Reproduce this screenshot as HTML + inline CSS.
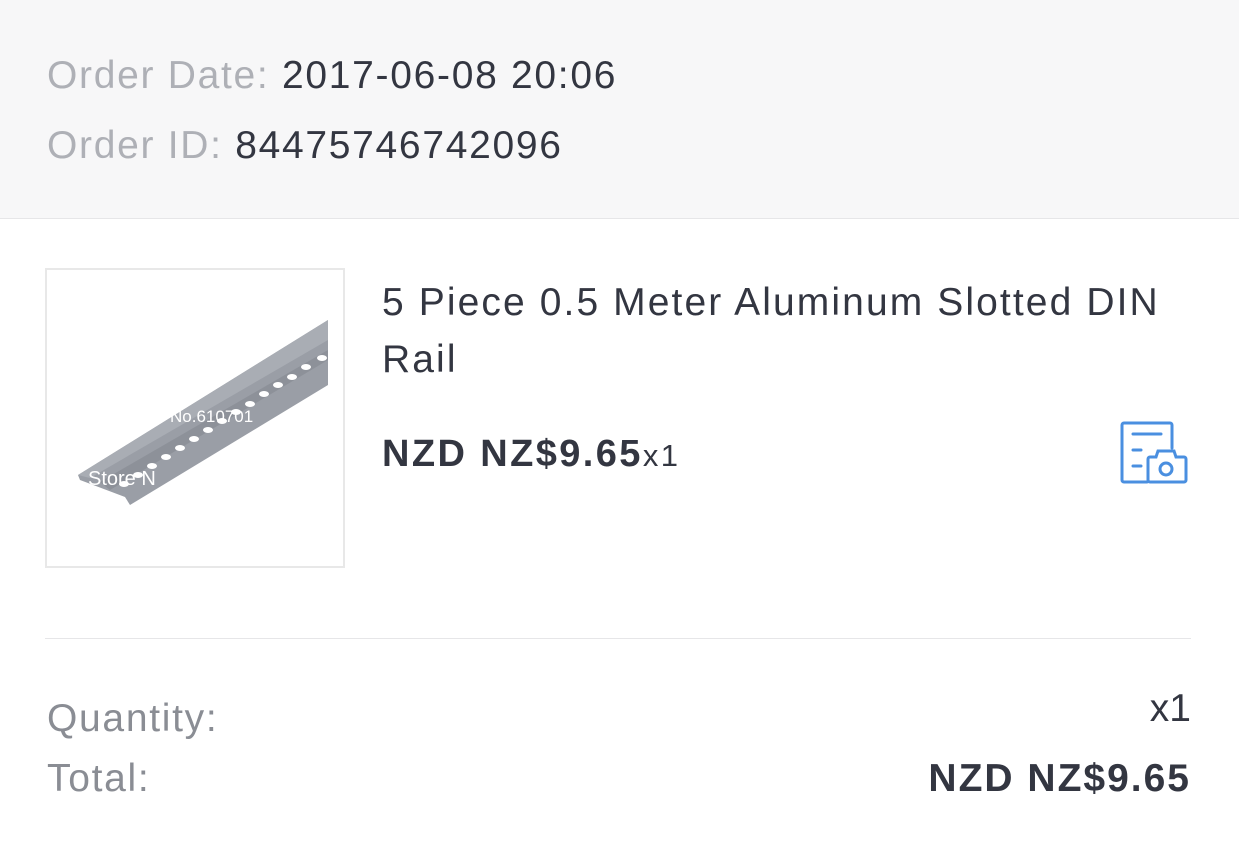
<!DOCTYPE html>
<html><head><meta charset="utf-8"><style>
*{margin:0;padding:0;box-sizing:border-box}
body{width:1239px;height:862px;background:#fff;font-family:"Liberation Sans",sans-serif;position:relative;overflow:hidden}
.hdr{position:absolute;left:0;top:0;width:1239px;height:219px;background:#f7f7f8;border-bottom:1px solid #e6e6e8}
.t{position:absolute;white-space:nowrap;font-size:39px;color:#333641;letter-spacing:1.7px}
.g{color:#aeb0b6}
.imgbox{position:absolute;left:45px;top:268px;width:300px;height:300px;border:2px solid #e8e8e8;background:#fff}
.hr{position:absolute;left:45px;top:638px;width:1146px;height:1px;background:#e6e6e8}
</style></head><body>
<div class="hdr"></div>
<div class="t" style="left:47px;top:54px"><span class="g">Order Date:</span> 2017-06-08 20:06</div>
<div class="t" style="left:47px;top:124px"><span class="g">Order ID:</span> 84475746742096</div>
<div class="imgbox">
<svg width="296" height="296" viewBox="47 270 296 296">
<polygon points="78,475 328,320 328,385 130,505 125,497 80,480" fill="#9a9ea6"/>
<polygon points="78,475 328,320 328,340 90,478" fill="#a9adb4"/>
<polygon points="100,482 328,350 328,360 110,490" fill="#8d9199"/>
<g fill="#fff">
<ellipse cx="322" cy="358" rx="5" ry="3"/><ellipse cx="306" cy="367" rx="5" ry="3"/><ellipse cx="292" cy="377" rx="5" ry="3"/><ellipse cx="278" cy="385" rx="5" ry="3"/><ellipse cx="264" cy="394" rx="5" ry="3"/><ellipse cx="250" cy="404" rx="5" ry="3"/><ellipse cx="236" cy="412" rx="5" ry="3"/><ellipse cx="222" cy="421" rx="5" ry="3"/><ellipse cx="208" cy="430" rx="5" ry="3"/><ellipse cx="194" cy="439" rx="5" ry="3"/><ellipse cx="180" cy="448" rx="5" ry="3"/><ellipse cx="166" cy="457" rx="5" ry="3"/><ellipse cx="152" cy="466" rx="5" ry="3"/><ellipse cx="138" cy="475" rx="5" ry="3"/><ellipse cx="124" cy="484" rx="5" ry="3"/>
</g>
<text x="170" y="422" font-size="17" fill="#fff" font-family="Liberation Sans">No.610701</text>
<text x="88" y="485" font-size="20" fill="#fff" font-family="Liberation Sans">Store N</text>
</svg>
</div>
<div class="t" style="left:382px;top:274px;line-height:57px;white-space:normal;width:800px;letter-spacing:2.1px">5 Piece 0.5 Meter Aluminum Slotted DIN Rail</div>
<div class="t" style="left:382px;top:433px;font-weight:bold;font-size:38px;letter-spacing:2.4px">NZD NZ$9.65<span style="font-weight:normal;font-size:31px">x1</span></div>
<svg style="position:absolute;left:1115px;top:418px" width="78" height="72" viewBox="1115 418 78 72" fill="none" stroke="#4a8fe0" stroke-width="3" stroke-linecap="round">
<path d="M1147 482 H1124 a2 2 0 0 1 -2 -2 V425 a2 2 0 0 1 2 -2 H1170 a2 2 0 0 1 2 2 V448"/>
<path d="M1133 434 H1161 M1133 450 H1141 M1133 466 H1141"/>
<path d="M1150 482 a2 2 0 0 1 -2 -2 V459 a2 2 0 0 1 2 -2 H1156 l2 -6 H1174 l2 6 H1184 a2 2 0 0 1 2 2 V480 a2 2 0 0 1 -2 2 Z"/>
<circle cx="1166" cy="469" r="6"/>
</svg>
<div class="hr"></div>
<div class="t g" style="left:47px;top:697px;color:#8a8d94">Quantity:</div>
<div class="t" style="right:48px;top:687px;letter-spacing:0">x1</div>
<div class="t g" style="left:47px;top:757px;color:#8a8d94">Total:</div>
<div class="t" style="right:48px;top:757px;font-weight:bold;letter-spacing:2px">NZD NZ$9.65</div>
</body></html>
